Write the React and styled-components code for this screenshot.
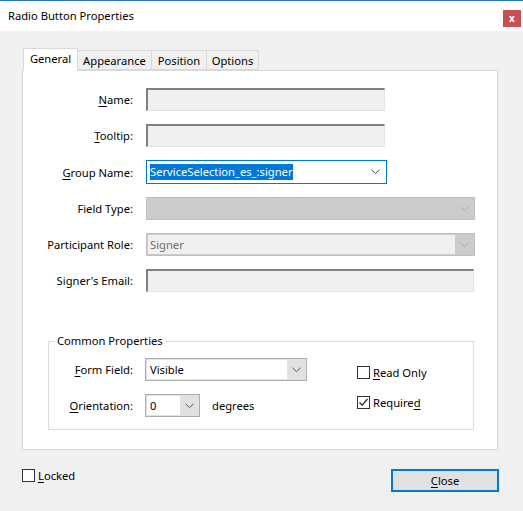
import React from "react";
import styled, { createGlobalStyle } from "styled-components";

const Global = createGlobalStyle`
  html, body { margin: 0; padding: 0; background: #f0f0f0; }
  body { font-family: "Noto Sans", "Open Sans", sans-serif; font-size: 11.2px; color: #000; }
  * { box-sizing: border-box; }
`;

const Dialog = styled.div`
  width: 523px;
  height: 511px;
  background: #f0f0f0;
  display: flex;
  flex-direction: column;
  border-top: 1px solid #2b79c4;
`;

const TitleBar = styled.div`
  height: 30px;
  background: #fff;
  display: flex;
  align-items: center;
  justify-content: space-between;
  padding: 0 2px 2px 8px;
`;

const Title = styled.div`
  font-size: 11.2px;
  line-height: 16px;
  margin-top: 1px;
`;

const CloseX = styled.div`
  width: 18px;
  height: 17px;
  background: #c75050;
  color: #fff;
  font-weight: bold;
  font-size: 10px;
  display: flex;
  align-items: center;
  justify-content: center;
  margin-top: 6px;
`;

const Body = styled.div`
  flex: 1;
  display: flex;
  flex-direction: column;
  padding: 17px 25px 0 22px;
`;

const TabStrip = styled.div`
  display: flex;
  align-items: flex-end;
  padding-left: 1px;
  position: relative;
  z-index: 1;
`;

const Tab = styled.div`
  height: ${(p) => (p.$active ? "23px" : "20px")};
  margin-bottom: ${(p) => (p.$active ? "-1px" : "0")};
  width: ${(p) => p.$w}px;
  background: ${(p) => (p.$active ? "#fff" : "#f0f0f0")};
  border: 1px solid #d9d9d9;
  border-bottom: ${(p) => (p.$active ? "none" : "1px solid #d9d9d9")};
  margin-left: ${(p) => (p.$first ? "0" : "-1px")};
  display: flex;
  align-items: ${(p) => (p.$active ? "flex-start" : "center")};
  justify-content: center;
  padding-top: ${(p) => (p.$active ? "2px" : "0")};
  font-size: 11.2px;
`;

const Panel = styled.div`
  background: #fff;
  border: 1px solid #d9d9d9;
  height: 380px;
  display: flex;
  flex-direction: column;
  padding: 17px 0 0 0;
`;

const Rows = styled.div`
  display: grid;
  grid-template-columns: 110px auto;
  column-gap: 13px;
  row-gap: 13px;
  align-items: center;
  justify-items: start;
`;

const Label = styled.div`
  justify-self: end;
  font-size: 11.2px;
  white-space: nowrap;
`;

const Key = styled.span`
  text-decoration: underline;
  text-underline-offset: 2px;
`;

const InsetBox = styled.div`
  width: ${(p) => p.$w}px;
  height: 23px;
  background: #f0f0f0;
  border-top: 2px solid #7f7f7f;
  border-left: 2px solid #7f7f7f;
  border-right: 1px solid #e3e3e3;
  border-bottom: 1px solid #e3e3e3;
`;

const FocusCombo = styled.div`
  width: ${(p) => p.$w}px;
  height: 24px;
  background: #fff;
  border: 1px solid #0078d7;
  display: flex;
  align-items: center;
  justify-content: space-between;
  padding: 0 6px 0 3px;
`;

const Selected = styled.span`
  background: #0078d7;
  color: #fff;
  line-height: 16px;
  font-size: 11.2px;
`;

const DisabledCombo = styled.div`
  width: ${(p) => p.$w}px;
  height: 23px;
  background: #cccccc;
  border: 1px solid #bfbfbf;
  display: flex;
  align-items: stretch;
  padding: ${(p) => (p.$inner ? "1px 0 1px 1px" : "0")};
`;

const DisabledText = styled.div`
  flex: 1;
  background: ${(p) => (p.$inner ? "#f0f0f0" : "transparent")};
  color: #6d6d6d;
  display: flex;
  align-items: center;
  padding-left: 2px;
  font-size: 11.2px;
`;

const ArrowCell = styled.div`
  width: ${(p) => p.$w || 19}px;
  display: flex;
  align-items: center;
  justify-content: center;
`;

const Group = styled.fieldset`
  margin: 42px 23px 0 25px;
  border: 1px solid #dcdcdc;
  padding: 10px 0 9px 0;
  height: 96px;
  min-width: 0;
`;

const Legend = styled.legend`
  margin-left: 6px;
  padding: 0 2px;
  font-size: 11.2px;
  line-height: 14px;
`;

const GroupBody = styled.div`
  display: flex;
  align-items: flex-start;
  gap: 50px;
`;

const GroupRows = styled.div`
  display: grid;
  grid-template-columns: 84px 162px;
  column-gap: 12px;
  row-gap: 13px;
  align-items: center;
  justify-items: start;
  flex-shrink: 0;
`;

const Inline = styled.div`
  display: flex;
  align-items: center;
  gap: 12px;
`;

const Combo = styled.div`
  width: ${(p) => p.$w}px;
  height: 23px;
  border: 1px solid #adadad;
  background: #e1e1e1;
  display: flex;
  align-items: stretch;
  padding: 1px 0 1px 1px;
`;

const ComboText = styled.div`
  flex: 1;
  background: #fff;
  display: flex;
  align-items: center;
  padding-left: 3px;
  font-size: 11.2px;
`;

const Unit = styled.div`
  font-size: 11.2px;
  white-space: nowrap;
`;

const Checks = styled.div`
  display: flex;
  flex-direction: column;
  gap: 17px;
  padding-top: 8px;
  flex-shrink: 0;
`;

const CheckRow = styled.label`
  display: flex;
  align-items: center;
  gap: 3px;
  font-size: 11.2px;
  height: 13px;
  white-space: nowrap;
`;

const Box = styled.span`
  width: 13px;
  height: 13px;
  border: 1px solid #333;
  background: #fff;
  display: inline-flex;
  align-items: center;
  justify-content: center;
  flex-shrink: 0;
`;

const Footer = styled.div`
  display: flex;
  justify-content: space-between;
  align-items: flex-start;
  padding-top: 19px;
  margin-right: -1px;
`;

const Button = styled.div`
  width: 108px;
  height: 23px;
  background: #e1e1e1;
  border: 2px solid #0078d7;
  display: flex;
  align-items: center;
  justify-content: center;
  font-size: 11.2px;
`;

const Chevron = ({ color = "#555" }) => (
  <svg width="9" height="6" viewBox="0 0 9 6">
    <path d="M0.5 0.8 L4.5 4.6 L8.5 0.8" fill="none" stroke={color} strokeWidth="1" />
  </svg>
);

const Check = ({ checked }) => (
  <Box>
    {checked && (
      <svg width="11" height="11" viewBox="0 0 11 11">
        <path d="M1.5 5.5 L4.2 8.2 L9.5 2" fill="none" stroke="#222" strokeWidth="1.2" />
      </svg>
    )}
  </Box>
);

export default function App() {
  return (
    <>
      <Global />
      <Dialog>
        <TitleBar>
          <Title>Radio Button Properties</Title>
          <CloseX>x</CloseX>
        </TitleBar>
        <Body>
          <TabStrip>
            <Tab $active $first $w={55}>General</Tab>
            <Tab $w={75}>Appearance</Tab>
            <Tab $w={56}>Position</Tab>
            <Tab $w={53}>Options</Tab>
          </TabStrip>
          <Panel>
            <Rows>
              <Label><Key>N</Key>ame:</Label>
              <InsetBox $w={239} />
              <Label><Key>T</Key>ooltip:</Label>
              <InsetBox $w={239} />
              <Label><Key>G</Key>roup Name:</Label>
              <FocusCombo $w={241}>
                <Selected>ServiceSelection_es_:signer</Selected>
                <Chevron color="#444" />
              </FocusCombo>
              <Label>Field Type:</Label>
              <DisabledCombo $w={329}>
                <DisabledText />
                <ArrowCell><Chevron color="#a8a8a8" /></ArrowCell>
              </DisabledCombo>
              <Label>Participant Role:</Label>
              <DisabledCombo $w={329} $inner>
                <DisabledText $inner>Signer</DisabledText>
                <ArrowCell><Chevron color="#a8a8a8" /></ArrowCell>
              </DisabledCombo>
              <Label>Signer's Email:</Label>
              <InsetBox $w={328} />
            </Rows>
            <Group>
              <Legend>Common Properties</Legend>
              <GroupBody>
                <GroupRows>
                  <Label><Key>F</Key>orm Field:</Label>
                  <Combo $w={162}>
                    <ComboText>Visible</ComboText>
                    <ArrowCell $w={19}><Chevron /></ArrowCell>
                  </Combo>
                  <Label><Key>O</Key>rientation:</Label>
                  <Inline>
                    <Combo $w={55}>
                      <ComboText>0</ComboText>
                      <ArrowCell $w={19}><Chevron /></ArrowCell>
                    </Combo>
                    <Unit>degrees</Unit>
                  </Inline>
                </GroupRows>
                <Checks>
                  <CheckRow><Check /><span><Key>R</Key>ead Only</span></CheckRow>
                  <CheckRow><Check checked /><span>Require<Key>d</Key></span></CheckRow>
                </Checks>
              </GroupBody>
            </Group>
          </Panel>
          <Footer>
            <CheckRow><Check /><span><Key>L</Key>ocked</span></CheckRow>
            <Button><span><Key>C</Key>lose</span></Button>
          </Footer>
        </Body>
      </Dialog>
    </>
  );
}
